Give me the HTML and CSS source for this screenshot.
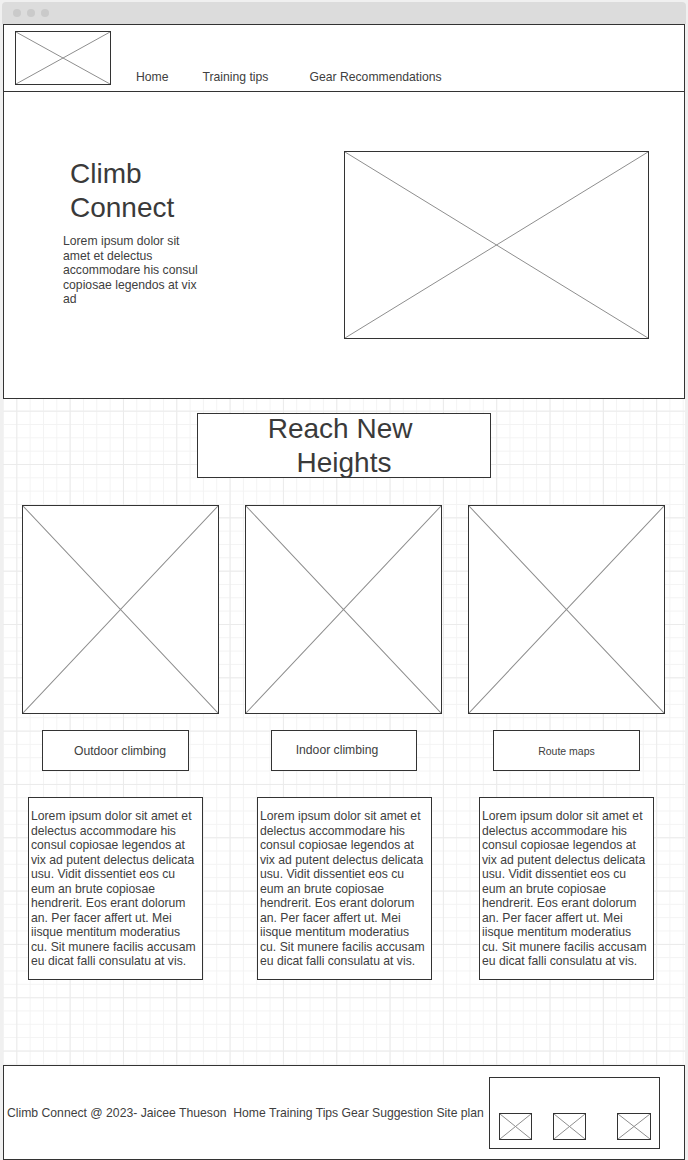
FILE: index.html
```html
<!DOCTYPE html>
<html lang="en">
<head>
  <meta charset="UTF-8" />
  <title>Climb Connect</title>
  <meta name="viewport" content="width=device-width, initial-scale=1.0"/>
  <link rel="stylesheet" href="styles.css">
</head>
<body>

  <!-- Browser chrome -->
  <div class="titlebar">
    <span class="dot"></span><span class="dot"></span><span class="dot"></span>
  </div>

  <div class="page">

    <!-- Header -->
    <header class="site-header">
      <div class="ph logo"><svg viewBox="0 0 100 100" preserveAspectRatio="none"><path d="M0 0L100 100M100 0L0 100"/></svg></div>
      <nav class="nav">
        <a>Home</a>
        <a>Training tips</a>
        <a>Gear Recommendations</a>
      </nav>
    </header>

    <!-- Hero -->
    <section class="hero">
      <div class="hero-text">
        <h1>Climb Connect</h1>
        <p>Lorem ipsum dolor sit amet et delectus accommodare his consul copiosae legendos at vix ad</p>
      </div>
      <div class="ph hero-img"><svg viewBox="0 0 100 100" preserveAspectRatio="none"><path d="M0 0L100 100M100 0L0 100"/></svg></div>
    </section>

    <!-- Features -->
    <section class="features">
      <div class="banner">Reach New&nbsp;<br>Heights</div>

      <div class="cards">
        <div class="card">
          <div class="ph card-img"><svg viewBox="0 0 100 100" preserveAspectRatio="none"><path d="M0 0L100 100M100 0L0 100"/></svg></div>
          <div class="label">Outdoor climbing</div>
          <div class="text">Lorem ipsum dolor sit amet et delectus accommodare his consul copiosae legendos at vix ad putent delectus delicata usu. Vidit dissentiet eos cu eum an brute copiosae hendrerit. Eos erant dolorum an. Per facer affert ut. Mei iisque mentitum moderatius cu. Sit munere facilis accusam eu dicat falli consulatu at vis.</div>
        </div>
        <div class="card">
          <div class="ph card-img"><svg viewBox="0 0 100 100" preserveAspectRatio="none"><path d="M0 0L100 100M100 0L0 100"/></svg></div>
          <div class="label">Indoor climbing</div>
          <div class="text">Lorem ipsum dolor sit amet et delectus accommodare his consul copiosae legendos at vix ad putent delectus delicata usu. Vidit dissentiet eos cu eum an brute copiosae hendrerit. Eos erant dolorum an. Per facer affert ut. Mei iisque mentitum moderatius cu. Sit munere facilis accusam eu dicat falli consulatu at vis.</div>
        </div>
        <div class="card">
          <div class="ph card-img"><svg viewBox="0 0 100 100" preserveAspectRatio="none"><path d="M0 0L100 100M100 0L0 100"/></svg></div>
          <div class="label small">Route maps</div>
          <div class="text">Lorem ipsum dolor sit amet et delectus accommodare his consul copiosae legendos at vix ad putent delectus delicata usu. Vidit dissentiet eos cu eum an brute copiosae hendrerit. Eos erant dolorum an. Per facer affert ut. Mei iisque mentitum moderatius cu. Sit munere facilis accusam eu dicat falli consulatu at vis.</div>
        </div>
      </div>
    </section>

    <!-- Footer -->
    <footer class="site-footer">
      <span class="footer-text">Climb Connect @ 2023- Jaicee Thueson&nbsp; Home Training Tips Gear Suggestion Site plan</span>
      <div class="socials">
        <div class="ph mini"><svg viewBox="0 0 100 100" preserveAspectRatio="none"><path d="M0 0L100 100M100 0L0 100"/></svg></div>
        <div class="ph mini"><svg viewBox="0 0 100 100" preserveAspectRatio="none"><path d="M0 0L100 100M100 0L0 100"/></svg></div>
        <div class="ph mini"><svg viewBox="0 0 100 100" preserveAspectRatio="none"><path d="M0 0L100 100M100 0L0 100"/></svg></div>
      </div>
    </footer>

  </div>
</body>
</html>
```

FILE: styles.css
```css
* { box-sizing: border-box; }
body {
  margin: 0; background: #f0f0f0;
  font-family: 'Liberation Sans', Arial, sans-serif; color: #404040;
}

.titlebar {
  height: 22px; margin: 2px 2px 0; background: #dcdcdc;
  border-radius: 4px 4px 0 0;
  display: flex; align-items: center; gap: 6px; padding-left: 11px;
}
.dot { width: 8px; height: 8px; border-radius: 50%; background: #cacaca; }

.page { margin: 0 3px; }

/* placeholder box with a cross */
.ph { border: 1px solid #333; background: #fff; }
.ph svg { display: block; width: 100%; height: 100%; }
.ph path { fill: none; stroke: #8e8e8e; stroke-width: 1; vector-effect: non-scaling-stroke; }

.site-header {
  height: 68px; border: 1px solid #333; background: #fff;
  display: flex; align-items: flex-start;
}
.logo { width: 96px; height: 54px; margin: 6px 0 0 11px; }
.nav { display: flex; gap: 34px; margin: 45px 0 0 25px; }
.nav a { font-size: 12.2px; line-height: 14px; color: #404040; }
.nav a:last-child { margin-left: 7px; }

.hero {
  height: 307px; border: 1px solid #333; border-top: none; background: #fff;
  display: flex; align-items: flex-start; padding: 59px 35px 0 59px;
}
.hero-text { width: 142px; margin-top: 6px; }
.hero h1 {
  margin: 0 0 0 7px; font-size: 28px; line-height: 34px; font-weight: normal; color: #3a3a3a;
}
.hero p { margin: 9px 0 0; font-size: 12.2px; line-height: 14.5px; }
.hero-img { width: 305px; height: 188px; margin-left: auto; }

.features {
  padding: 14px 0 85px;
  background-color: #fff;
  background-image:
    linear-gradient(#ebebeb 1px, transparent 1px),
    linear-gradient(90deg, #ebebeb 1px, transparent 1px),
    linear-gradient(#f3f3f3 1px, transparent 1px),
    linear-gradient(90deg, #f3f3f3 1px, transparent 1px);
  background-size: 53.33px 53.33px, 53.33px 53.33px, 13.33px 13.33px, 13.33px 13.33px;
  background-position: 0 11.7px, 13.3px 0, 0 11.7px, 0 0;
}
.banner {
  width: 294px; height: 65px; margin-left: 194px;
  border: 1px solid #333; background: #fff;
  display: flex; align-items: center; justify-content: center;
  text-align: center; font-size: 28px; line-height: 34px; color: #3a3a3a;
}

.cards {
  display: grid; grid-template-columns: 197px 197px 197px; column-gap: 26px;
  margin-top: 27px; padding-left: 19px;
}
.card-img { height: 209px; }
.label {
  width: 147px; height: 41px; margin: 16px 0 0 25px;
  border: 1px solid #333; background: #fff;
  display: flex; align-items: center; justify-content: center;
  font-size: 12.2px;
}
.label.small { font-size: 10.5px; padding-top: 1px; }
.card:nth-child(1) .label { margin-left: 20px; padding-left: 9px; }
.card:nth-child(2) .label { width: 146px; margin-left: 26px; padding-right: 14px; padding-bottom: 2px; }

.text {
  width: 175px; height: 183px; margin: 26px 0 0 11px;
  border: 1px solid #333; background: #fff;
  padding: 11px 4.5px 0 2px; font-size: 12.2px; line-height: 14.5px;
}
.card:nth-child(1) .text { margin-left: 6px; }
.card:nth-child(2) .text { margin-left: 12px; }

.site-footer {
  height: 95px; border: 1px solid #333; background: #fff;
  display: flex; align-items: center; padding-left: 3px;
}
.footer-text { font-size: 12.2px; white-space: nowrap; }
.socials {
  width: 171px; height: 72px; margin: 1px 24px 0 auto;
  border: 1px solid #333; background: #fff;
  display: flex; align-items: flex-end; padding: 0 0 8px 9px;
}
.mini { width: 33px; height: 27px; }
.mini + .mini { margin-left: 21px; }
.mini:last-child { width: 34px; margin-left: 31px; }
```
